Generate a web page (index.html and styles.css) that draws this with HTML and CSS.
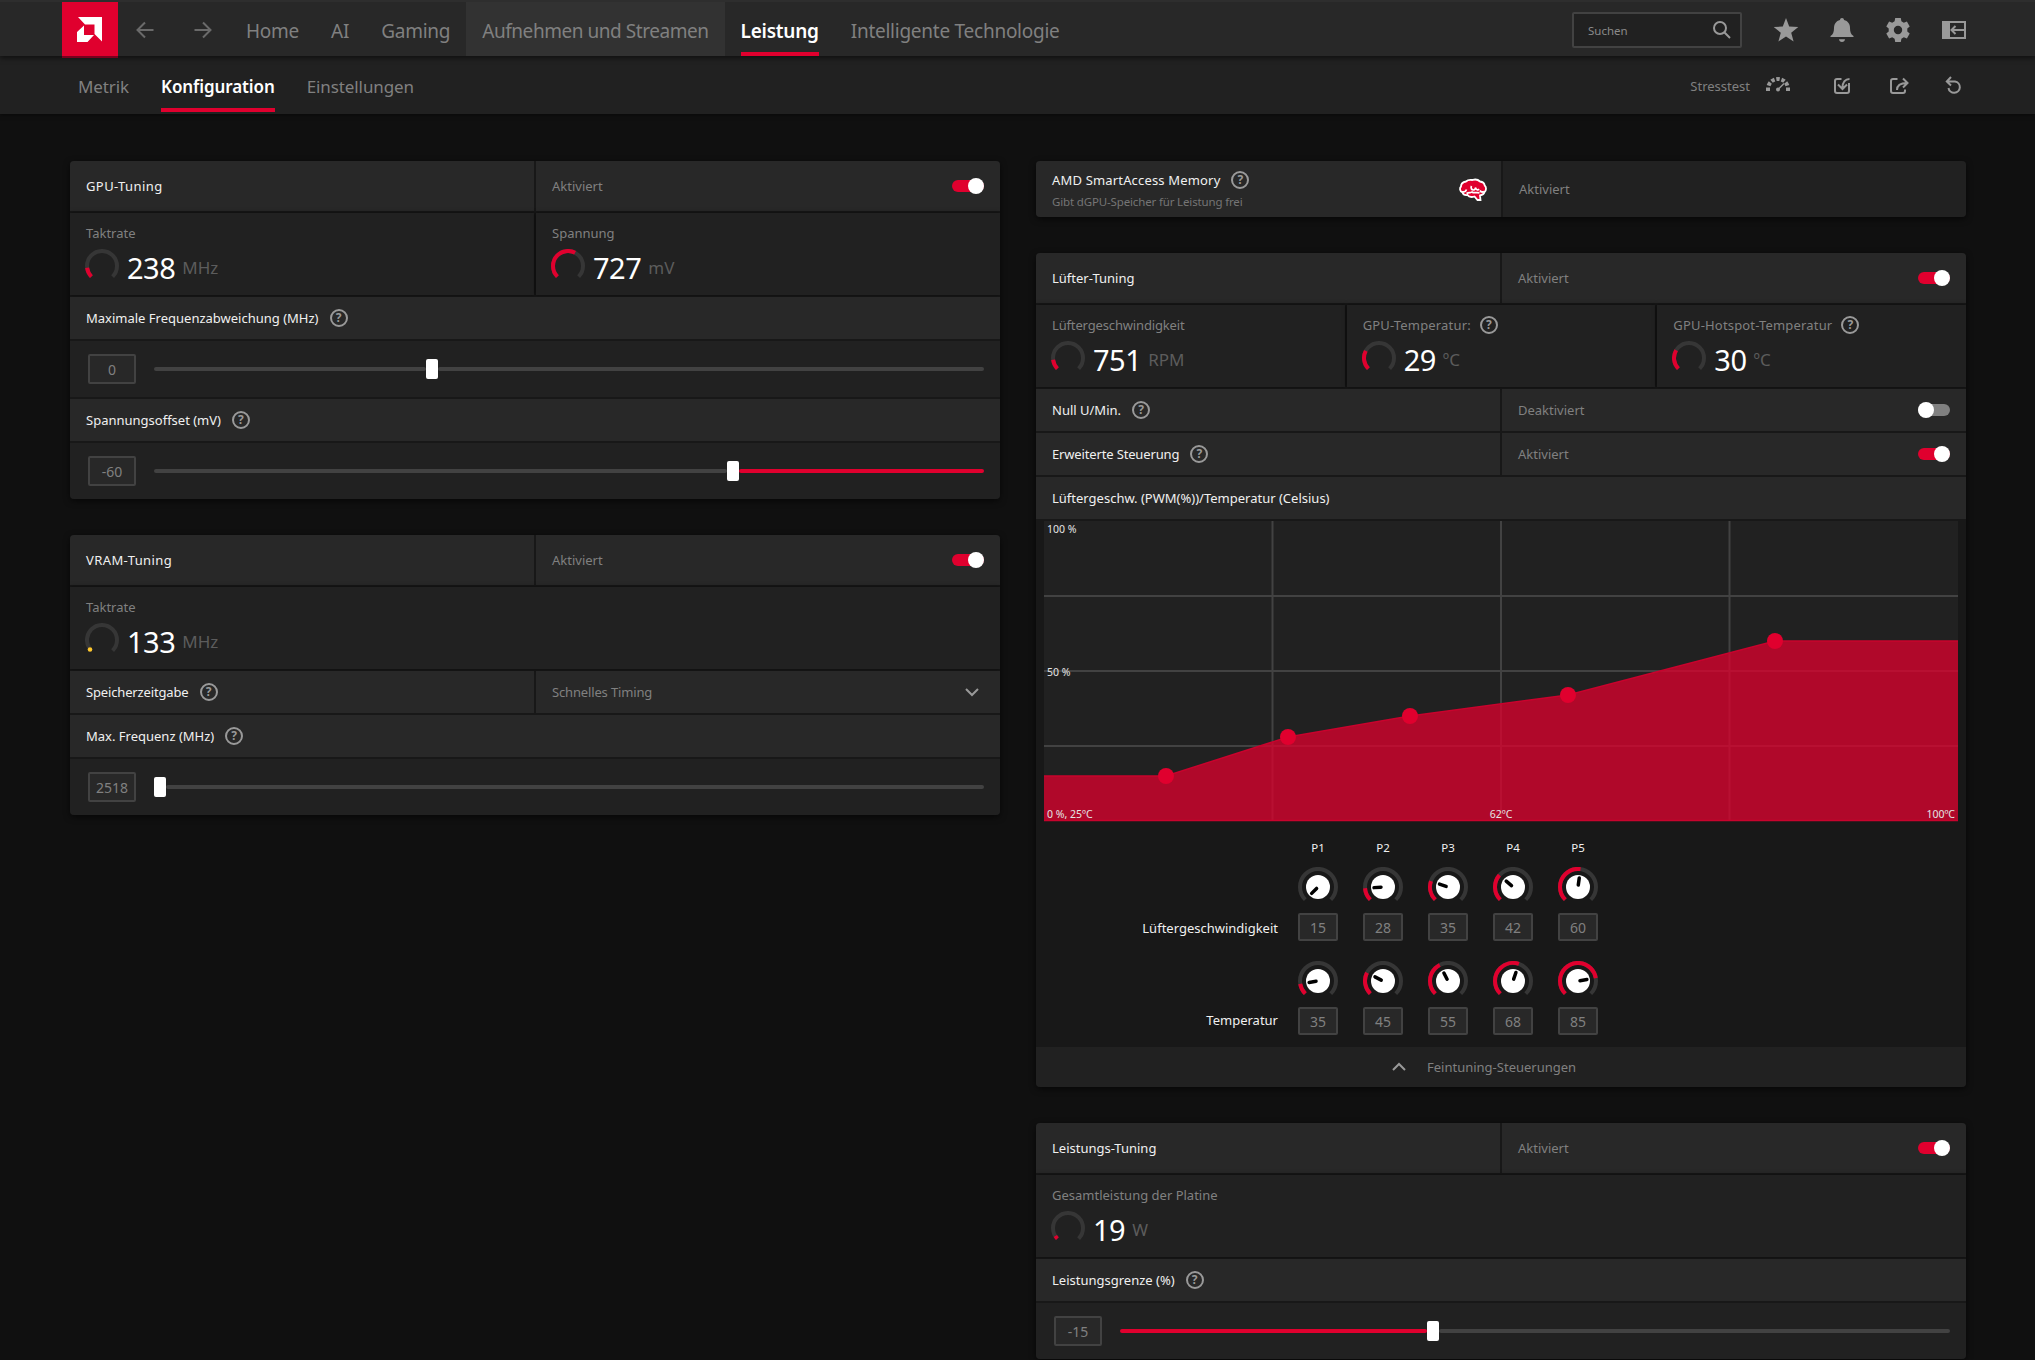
FILE: index.html
```html
<!DOCTYPE html>
<html lang="de">
<head>
  <meta charset="UTF-8">
  <title>Leistung - Konfiguration</title>
  <link rel="stylesheet" href="styles.css">
</head>
<body>

  <!-- shared shapes -->
  <svg class="defs" width="0" height="0">
    <symbol id="gauge" viewBox="0 0 34 34">
      <path d="M6.4 27.6A15 15 0 1 1 27.6 27.6" pathLength="270" fill="none" stroke-width="4"/>
    </symbol>
    <symbol id="ring" viewBox="0 0 40 40">
      <path d="M7.3 32.7A18 18 0 1 1 32.7 32.7" pathLength="270" fill="none" stroke-width="4"/>
    </symbol>
  </svg>

  <header class="topbar">
    <div class="logo">
      <svg width="25" height="25" viewBox="0 0 25 25" fill="#fff">
        <path d="M1 0H25V24.5L17.5 17V7.5H8z"/>
        <path d="M7 8.500V18H17L10.500 25H0V15z"/>
      </svg>
    </div>
    <div class="history">
      <svg width="18" height="18" viewBox="0 0 18 18"><path d="M17.500 9H2M9 1.500L1.500 9L9 16.500"/></svg>
      <svg width="18" height="18" viewBox="0 0 18 18"><path d="M.5 9H16M9 1.500L16.500 9L9 16.500"/></svg>
    </div>
    <nav class="main-nav">
      <a>Home</a>
      <a>AI</a>
      <a>Gaming</a>
      <a class="hover">Aufnehmen und Streamen</a>
      <a class="active"><span>Leistung</span></a>
      <a>Intelligente Technologie</a>
    </nav>
    <div class="tools">
      <div class="search">
        <span>Suchen</span>
        <svg width="18" height="18" viewBox="0 0 18 18" fill="none" stroke="#999" stroke-width="2"><circle cx="7" cy="7" r="6"/><path d="M11.300 11.300L17 17"/></svg>
      </div>
      <svg width="24" height="24" viewBox="0 0 24 24" fill="#999"><path d="M12 0L15.200 8.600L24.300 9L17.200 14.700L19.600 23.500L12 18.400L4.400 23.500L6.800 14.700L-.3 9L8.800 8.600z"/></svg>
      <svg width="24" height="24" viewBox="0 0 24 24" fill="#999"><path d="M12 0C13.200 0 14 .8 14 2C18 3 20 6 20 10C20 14 21 16.500 23.500 18V19H.5V18C3 16.500 4 14 4 10C4 6 6 3 10 2C10 .8 10.800 0 12 0zM9 21.200H15C15 22.800 13.600 24 12 24S9 22.800 9 21.200z"/></svg>
      <svg width="24" height="24" viewBox="0 0 24 24" fill="#999" fill-rule="evenodd"><path d="M9.200 0H14.800L15.400 3.300L17.800 4.700L20.900 3.500L23.700 8.400L21.300 10.500V13.500L23.700 15.600L20.900 20.500L17.800 19.300L15.400 20.700L14.800 24H9.200L8.600 20.700L6.200 19.300L3.100 20.500L.3 15.600L2.700 13.500V10.500L.3 8.400L3.100 3.500L6.200 4.700L8.600 3.300zM12 7.800A4.200 4.200 0 1 0 12 16.200A4.200 4.200 0 1 0 12 7.800z"/></svg>
      <svg width="24" height="24" viewBox="0 0 24 24" fill="none" stroke="#999" stroke-width="2"><path d="M0 3H8V21H0z" fill="#999" stroke="none"/><path d="M1 4H23V20H1zM22 12H9.500M13.500 8L9.500 12L13.500 16"/></svg>
    </div>
  </header>

  <div class="subbar">
    <nav class="sub-nav">
      <a>Metrik</a>
      <a class="active"><span>Konfiguration</span></a>
      <a>Einstellungen</a>
    </nav>
    <div class="actions">
      <span class="stress">Stresstest</span>
      <svg class="speed" width="24" height="24" viewBox="0 0 24 24" fill="none" stroke="#999"><path d="M2 15A10 10 0 0 1 22 15" stroke-width="4" pathLength="180" stroke-dasharray="0 20 20 10 20 10 20 10 20 10 20 400"/><path d="M2 17V13.500M22 17V13.500" stroke-width="4"/><path d="M12 15.500L18 9.500" stroke-width="1.500"/><circle cx="12" cy="15.500" r="2" fill="#999" stroke="none"/></svg>
      <svg width="24" height="24" viewBox="0 0 24 24" fill="none" stroke="#999" stroke-width="2"><path d="M11.500 5H7Q5 5 5 7V17Q5 19 7 19H17Q19 19 19 17V9M19.500 5C15.500 5 12.500 8 12.500 14M8 10.500L12.500 15L17 10.500"/></svg>
      <svg width="24" height="24" viewBox="0 0 24 24" fill="none" stroke="#999" stroke-width="2"><path d="M11.500 5H7Q5 5 5 7V17Q5 19 7 19H17Q19 19 19 17V15.500M11 16C11 11.500 13.500 9 21 9M17 4.500L21.500 9L17 13.500"/></svg>
      <svg width="24" height="24" viewBox="0 0 24 24" fill="none" stroke="#999" stroke-width="2"><path d="M5 7.500H13A5.700 5.700 0 1 1 6.500 14M9 3L4.800 7.500L9 11.500"/></svg>
    </div>
  </div>

  <main class="page">

    <div class="column">

      <section class="card">
        <div class="row head">
          <div class="cell"><span class="t caps">GPU-Tuning</span></div>
          <div class="cell"><span class="state">Aktiviert</span><span class="toggle on"></span></div>
        </div>
        <div class="row">
          <div class="metric">
            <div class="label">Taktrate</div>
            <div class="value">
              <svg width="34" height="34"><use href="#gauge" class="track-arc"/><use href="#gauge" class="fill-arc" stroke-dasharray="38 400"/></svg>
              <b>238</b><i>MHz</i>
            </div>
          </div>
          <div class="metric">
            <div class="label">Spannung</div>
            <div class="value">
              <svg width="34" height="34"><use href="#gauge" class="track-arc"/><use href="#gauge" class="fill-arc" stroke-dasharray="163 400"/></svg>
              <b>727</b><i>mV</i>
            </div>
          </div>
        </div>
        <div class="row sub"><div class="cell"><span class="t">Maximale Frequenzabweichung (MHz)</span><span class="help">?</span></div></div>
        <div class="row slider-row">
          <span class="box">0</span>
          <div class="slider"><span class="track" style="flex-grow: 333"></span><span class="thumb"></span><span class="track" style="flex-grow: 667"></span></div>
        </div>
        <div class="row sub"><div class="cell"><span class="t">Spannungsoffset (mV)</span><span class="help">?</span></div></div>
        <div class="row slider-row">
          <span class="box">-60</span>
          <div class="slider"><span class="track" style="flex-grow: 700"></span><span class="thumb"></span><span class="track red" style="flex-grow: 300"></span></div>
        </div>
      </section>

      <section class="card">
        <div class="row head">
          <div class="cell"><span class="t caps">VRAM-Tuning</span></div>
          <div class="cell"><span class="state">Aktiviert</span><span class="toggle on"></span></div>
        </div>
        <div class="row">
          <div class="metric">
            <div class="label">Taktrate</div>
            <div class="value">
              <svg width="34" height="34"><use href="#gauge" class="track-arc" stroke-dasharray="0 14 400"/><circle cx="5" cy="26.500" r="2.300" fill="#ffc82e"/></svg>
              <b>133</b><i>MHz</i>
            </div>
          </div>
        </div>
        <div class="row sub">
          <div class="cell"><span class="t tight">Speicherzeitgabe</span><span class="help">?</span></div>
          <div class="cell">
            <span class="state tight">Schnelles Timing</span>
            <svg class="chevron" width="14" height="8" viewBox="0 0 14 8"><path d="M1 1L7 7L13 1"/></svg>
          </div>
        </div>
        <div class="row sub"><div class="cell"><span class="t">Max. Frequenz (MHz)</span><span class="help">?</span></div></div>
        <div class="row slider-row">
          <span class="box">2518</span>
          <div class="slider"><span class="thumb"></span><span class="track" style="flex-grow: 1"></span></div>
        </div>
      </section>

    </div>

    <div class="column">

      <section class="card">
        <div class="row sam">
          <div class="cell">
            <div class="sam-text">
              <div class="sam-title"><span class="t wide">AMD SmartAccess Memory</span><span class="help">?</span></div>
              <div class="sam-note">Gibt dGPU-Speicher für Leistung frei</div>
            </div>
            <svg class="brain" width="28" height="22" viewBox="0 0 28 22">
              <path d="M7 2.500C9 .5 11 .5 13.500 1C16 .2 19 .5 21 2.500C24 3 25.500 5 25.700 6.500C27.500 8 27.500 11.500 25.500 13C25 15 23.500 16 21 16.500L21.500 21H18.500L15.500 17.500C12 18.500 9.500 17.500 8.500 16C5.500 16.500 4 15 3.500 13.500C.5 12.500 .5 9 2 7.500C2 5 4 3 7 2.500z" fill="#e0002e" stroke="#fff" stroke-width="1.800"/>
              <path d="M3 12.800C6 13.500 7 12 7.500 10.500M7.500 14.500C10 13 12 14 13 13C15 14.500 17 13 20.500 13.800M12.500 7C11.500 9 12.500 11 14.500 11C16 11 16.500 9.500 16.300 8.500C17 11 19 11.500 20 10M25 12.500C23 13.500 21.500 12.500 21 11.500" fill="none" stroke="#fff" stroke-width="1.700"/>
            </svg>
          </div>
          <div class="cell dark"><span class="state">Aktiviert</span></div>
        </div>
      </section>

      <section class="card">
        <div class="row head">
          <div class="cell"><span class="t">Lüfter-Tuning</span></div>
          <div class="cell"><span class="state">Aktiviert</span><span class="toggle on"></span></div>
        </div>
        <div class="row">
          <div class="metric">
            <div class="label tight">Lüftergeschwindigkeit</div>
            <div class="value">
              <svg width="34" height="34"><use href="#gauge" class="track-arc"/><use href="#gauge" class="fill-arc" stroke-dasharray="38 400"/></svg>
              <b>751</b><i>RPM</i>
            </div>
          </div>
          <div class="metric">
            <div class="label wide">GPU-Temperatur:<span class="help">?</span></div>
            <div class="value">
              <svg width="34" height="34"><use href="#gauge" class="track-arc"/><use href="#gauge" class="fill-arc" stroke-dasharray="73 400"/></svg>
              <b>29</b><i>ºC</i>
            </div>
          </div>
          <div class="metric">
            <div class="label wide">GPU-Hotspot-Temperatur<span class="help">?</span></div>
            <div class="value">
              <svg width="34" height="34"><use href="#gauge" class="track-arc"/><use href="#gauge" class="fill-arc" stroke-dasharray="76 400"/></svg>
              <b>30</b><i>ºC</i>
            </div>
          </div>
        </div>
        <div class="row sub">
          <div class="cell"><span class="t">Null U/Min.</span><span class="help">?</span></div>
          <div class="cell"><span class="state">Deaktiviert</span><span class="toggle"></span></div>
        </div>
        <div class="row sub">
          <div class="cell"><span class="t tight">Erweiterte Steuerung</span><span class="help">?</span></div>
          <div class="cell"><span class="state">Aktiviert</span><span class="toggle on"></span></div>
        </div>
        <div class="row sub"><div class="cell"><span class="t">Lüftergeschw. (PWM(%))/Temperatur (Celsius)</span></div></div>

        <svg class="chart" width="914" height="300" viewBox="0 0 914 300">
          <rect width="914" height="300" fill="#212121"/>
          <path d="M228.500 0V300M457 0V300M685.500 0V300M0 75H914M0 150H914M0 225H914" stroke="#424242" stroke-width="2"/>
          <path d="M0 255H122L244 216L366 195L524 174L731 120H914V300H0z" fill="#e0002e" fill-opacity=".75"/>
          <path d="M0 255H122L244 216L366 195L524 174L731 120H914M0 299.500H914" fill="none" stroke="#c8032d" stroke-width="1.500"/>
          <g fill="#e0002e">
            <circle cx="122" cy="255" r="8"/>
            <circle cx="244" cy="216" r="8"/>
            <circle cx="366" cy="195" r="8"/>
            <circle cx="524" cy="174" r="8"/>
            <circle cx="731" cy="120" r="8"/>
          </g>
          <g class="axis">
            <text x="3" y="12">100 %</text>
            <text x="3" y="155">50 %</text>
            <text x="3" y="297">0 %, 25ºC</text>
            <text x="457" y="297" text-anchor="middle">62ºC</text>
            <text x="911" y="297" text-anchor="end">100ºC</text>
          </g>
        </svg>

        <div class="points">
          <span></span>
          <span class="p">P1</span><span class="p">P2</span><span class="p">P3</span><span class="p">P4</span><span class="p">P5</span>

          <span class="name">Lüftergeschwindigkeit</span>
          <div class="knob">
            <svg width="40" height="40"><use href="#ring" class="track-arc"/><circle cx="20" cy="20" r="12"/><path d="M20 18V11" transform="rotate(-135 20 20)"/></svg>
            <span class="box">15</span>
          </div>
          <div class="knob">
            <svg width="40" height="40"><use href="#ring" class="track-arc"/><use href="#ring" class="fill-arc" stroke-dasharray="41 400"/><circle cx="20" cy="20" r="12"/><path d="M20 18V11" transform="rotate(-94 20 20)"/></svg>
            <span class="box">28</span>
          </div>
          <div class="knob">
            <svg width="40" height="40"><use href="#ring" class="track-arc"/><use href="#ring" class="fill-arc" stroke-dasharray="64 400"/><circle cx="20" cy="20" r="12"/><path d="M20 18V11" transform="rotate(-71 20 20)"/></svg>
            <span class="box">35</span>
          </div>
          <div class="knob">
            <svg width="40" height="40"><use href="#ring" class="track-arc"/><use href="#ring" class="fill-arc" stroke-dasharray="86 400"/><circle cx="20" cy="20" r="12"/><path d="M20 18V11" transform="rotate(-49 20 20)"/></svg>
            <span class="box">42</span>
          </div>
          <div class="knob">
            <svg width="40" height="40"><use href="#ring" class="track-arc"/><use href="#ring" class="fill-arc" stroke-dasharray="143 400"/><circle cx="20" cy="20" r="12"/><path d="M20 18V11" transform="rotate(8 20 20)"/></svg>
            <span class="box">60</span>
          </div>

          <span class="name temp">Temperatur</span>
          <div class="knob">
            <svg width="40" height="40"><use href="#ring" class="track-arc"/><use href="#ring" class="fill-arc" stroke-dasharray="36 400"/><circle cx="20" cy="20" r="12"/><path d="M20 18V11" transform="rotate(-99 20 20)"/></svg>
            <span class="box">35</span>
          </div>
          <div class="knob">
            <svg width="40" height="40"><use href="#ring" class="track-arc"/><use href="#ring" class="fill-arc" stroke-dasharray="72 400"/><circle cx="20" cy="20" r="12"/><path d="M20 18V11" transform="rotate(-63 20 20)"/></svg>
            <span class="box">45</span>
          </div>
          <div class="knob">
            <svg width="40" height="40"><use href="#ring" class="track-arc"/><use href="#ring" class="fill-arc" stroke-dasharray="108 400"/><circle cx="20" cy="20" r="12"/><path d="M20 18V11" transform="rotate(-27 20 20)"/></svg>
            <span class="box">55</span>
          </div>
          <div class="knob">
            <svg width="40" height="40"><use href="#ring" class="track-arc"/><use href="#ring" class="fill-arc" stroke-dasharray="154 400"/><circle cx="20" cy="20" r="12"/><path d="M20 18V11" transform="rotate(19 20 20)"/></svg>
            <span class="box">68</span>
          </div>
          <div class="knob">
            <svg width="40" height="40"><use href="#ring" class="track-arc"/><use href="#ring" class="fill-arc" stroke-dasharray="216 400"/><circle cx="20" cy="20" r="12"/><path d="M20 18V11" transform="rotate(81 20 20)"/></svg>
            <span class="box">85</span>
          </div>
        </div>

        <div class="fine">
          <svg class="chevron" width="14" height="8" viewBox="0 0 14 8"><path d="M1 7L7 1L13 7"/></svg>
          <span class="state">Feintuning-Steuerungen</span>
        </div>
      </section>

      <section class="card">
        <div class="row head">
          <div class="cell"><span class="t">Leistungs-Tuning</span></div>
          <div class="cell"><span class="state">Aktiviert</span><span class="toggle on"></span></div>
        </div>
        <div class="row">
          <div class="metric">
            <div class="label">Gesamtleistung der Platine</div>
            <div class="value">
              <svg width="34" height="34"><use href="#gauge" class="track-arc"/><use href="#gauge" class="fill-arc" stroke-dasharray="13 400"/></svg>
              <b>19</b><i>W</i>
            </div>
          </div>
        </div>
        <div class="row sub"><div class="cell"><span class="t">Leistungsgrenze (%)</span><span class="help">?</span></div></div>
        <div class="row slider-row">
          <span class="box">-15</span>
          <div class="slider"><span class="track red" style="flex-grow: 375"></span><span class="thumb"></span><span class="track" style="flex-grow: 625"></span></div>
        </div>
      </section>

    </div>
  </main>

</body>
</html>
```
FILE: styles.css
```css
* {
  margin: 0;
  padding: 0;
  box-sizing: border-box;
}

body {
  background: #101010;
  color: #f0f0f0;
  font-family: "Noto Sans", "Open Sans", sans-serif;
  font-size: 13px;
  height: 1360px;
  overflow: hidden;
}

svg {
  display: block;
  flex-shrink: 0;
  overflow: visible;
}

.defs {
  position: absolute;
}

/* top bar */
.topbar {
  display: flex;
  height: 56px;
  padding: 0 69px 0 62px;
  background: #282828;
  border-top: 2px solid #2e2e2e;
  box-shadow: 0 2px 5px rgba(0, 0, 0, 0.55);
  position: relative;
}

.logo {
  width: 56px;
  height: 56px;
  padding: 15px;
  background: #e0002e;
  border-bottom: 2px solid #7a001e;
}

.history {
  display: flex;
  gap: 40px;
  padding: 19px 18px 0 18px;
  fill: none;
  stroke: #6a6a6a;
  stroke-width: 2;
}

.main-nav,
.sub-nav {
  display: flex;
  color: #808080;
}

.main-nav a {
  padding: 0 16px;
  font-size: 19px;
  line-height: 59px;
  letter-spacing: -0.25px;
  white-space: nowrap;
}

.main-nav .hover {
  background: #323232;
  letter-spacing: -0.45px;
}

.main-nav .active,
.sub-nav .active {
  color: #fff;
  font-weight: 600;
}

.main-nav .active span,
.sub-nav .active span {
  display: block;
  height: 54px;
  border-bottom: 4px solid #e0002e;
}

.tools {
  display: flex;
  align-items: center;
  gap: 32px;
  margin-left: auto;
  padding-top: 2px;
}

.search {
  display: flex;
  align-items: center;
  justify-content: space-between;
  width: 170px;
  height: 36px;
  padding: 0 9px 0 14px;
  border: 2px solid #424242;
  border-radius: 2px;
  background: #212121;
  color: #8a8a8a;
  font-size: 11.5px;
}

/* second bar */
.subbar {
  display: flex;
  justify-content: space-between;
  height: 58px;
  padding: 2px 69px 0 62px;
  background: #212121;
  box-shadow: 0 1px 4px rgba(0, 0, 0, 0.5);
}

.sub-nav a {
  padding: 0 16px;
  font-size: 17px;
  line-height: 57px;
  letter-spacing: -0.1px;
}

.actions {
  display: flex;
  align-items: center;
  gap: 32px;
  padding-bottom: 1px;
}

.stress {
  color: #808080;
  margin-right: -16px;
}

.speed {
  margin-right: 8px;
}

/* cards */
.page {
  display: flex;
  gap: 36px;
  padding: 47px 69px 0 70px;
}

.column {
  display: flex;
  flex-direction: column;
  gap: 36px;
  width: 930px;
}

.card {
  display: flex;
  flex-direction: column;
  gap: 2px;
  background: #181818;
  border-radius: 4px;
  overflow: hidden;
  box-shadow: 0 2px 6px rgba(0, 0, 0, 0.6);
}

.row {
  display: flex;
  gap: 2px;
}

.cell {
  flex: 1 1 0;
  display: flex;
  align-items: center;
  padding: 0 16px;
  background: #282828;
}

.cell.dark {
  flex: 0 0 463px;
  background: #212121;
}

.head {
  height: 50px;
}

.sub {
  height: 42px;
}

.state {
  color: #808080;
}

.caps {
  letter-spacing: 0.4px;
}

.wide {
  letter-spacing: 0.17px;
}

.tight {
  letter-spacing: -0.15px;
}

.help {
  width: 18px;
  height: 18px;
  margin-left: 11px;
  border: 2px solid #999;
  border-radius: 50%;
  color: #999;
  font-size: 12px;
  font-weight: 700;
  letter-spacing: 0;
  line-height: 14px;
  text-align: center;
}

.toggle {
  display: flex;
  align-items: center;
  width: 32px;
  height: 12px;
  margin-left: auto;
  border-radius: 6px;
  background: #808080;
}

.toggle::after {
  content: "";
  width: 16px;
  height: 16px;
  border-radius: 50%;
  background: #fff;
}

.toggle.on {
  justify-content: flex-end;
  background: #e0002e;
}

.chevron {
  margin-left: auto;
  margin-right: 5px;
  fill: none;
  stroke: #999;
  stroke-width: 2;
}

/* gauges */
.metric {
  flex: 1 1 0;
  height: 82px;
  padding: 11px 15px 0;
  background: #212121;
  box-shadow: 0 0 4px rgba(0, 0, 0, 0.6);
}

.label {
  display: flex;
  align-items: center;
  height: 18px;
  padding-left: 1px;
  color: #808080;
}

.label .help {
  margin-left: 9px;
}

.value {
  display: flex;
  align-items: flex-start;
  height: 34px;
  margin-top: 7px;
}

.value b {
  margin-left: 8px;
  color: #fff;
  font-size: 29px;
  font-weight: 400;
  letter-spacing: -0.5px;
  line-height: 38px;
}

.value i {
  margin-left: 7px;
  color: #5c5c5c;
  font-size: 17px;
  font-style: normal;
  line-height: 38px;
}

.track-arc {
  stroke: #363636;
}

.fill-arc {
  stroke: #e0002e;
}

/* sliders */
.slider-row {
  align-items: center;
  gap: 18px;
  height: 56px;
  padding: 0 16px 0 18px;
  background: #212121;
}

.box {
  width: 48px;
  height: 30px;
  border: 2px solid #424242;
  border-radius: 2px;
  background: #282828;
  color: #808080;
  font-size: 14px;
  line-height: 27px;
  text-align: center;
}

.slider {
  flex: 1;
  display: flex;
  align-items: center;
}

.track {
  height: 4px;
  border-radius: 2px;
  background: #424242;
}

.track.red {
  background: #e0002e;
}

.thumb {
  width: 12px;
  height: 20px;
  border-radius: 2px;
  background: #fff;
}

/* smart access memory */
.sam {
  height: 56px;
}

.sam-text {
  padding-top: 2px;
}

.sam-title {
  display: flex;
  align-items: center;
  height: 20px;
}

.sam-note {
  margin-top: 4px;
  color: #757575;
  font-size: 11.5px;
  letter-spacing: -0.15px;
  line-height: 16px;
}

.brain {
  margin: 2px -2px 0 auto;
}

/* fan curve */
.chart {
  margin: 0 8px;
}

.axis {
  fill: #e4e4e4;
  font-size: 10.5px;
}

.points {
  display: grid;
  grid-template-columns: 237px repeat(5, 40px);
  grid-template-rows: 28px 94px 80px;
  column-gap: 25px;
  align-items: start;
  height: 222px;
  padding-top: 16px;
}

.points .p {
  font-size: 11.5px;
  line-height: 18px;
  text-align: center;
}

.name {
  margin: 52px -5px 0 0;
  line-height: 18px;
  text-align: right;
}

.name.temp {
  margin-top: 50px;
}

.knob svg {
  fill: #fff;
}

.knob svg path {
  stroke: #000;
  stroke-width: 3.5;
  stroke-linecap: round;
}

.knob .box {
  display: block;
  width: 40px;
  height: 28px;
  margin-top: 6px;
  line-height: 25px;
}

.fine {
  display: flex;
  align-items: center;
  height: 40px;
  padding-left: 356px;
  background: #212121;
}

.fine .chevron {
  margin: 0 21px 0 0;
}
```
